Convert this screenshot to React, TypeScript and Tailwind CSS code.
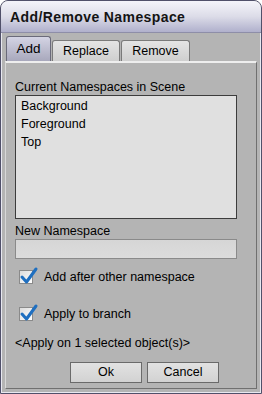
import React from "react";

function Check() {
  return (
    <div className="relative w-[14px] h-[14px] border border-[#8a8a8a] bg-gradient-to-br from-[#dcdcdc] to-[#ffffff]">
      <svg className="absolute left-[-1px] top-[-5px]" width="20" height="20" viewBox="0 0 20 20">
        <path d="M3 11 L7.5 16 L17 3" fill="none" stroke="#1f6fc0" strokeWidth="3" strokeLinecap="round" strokeLinejoin="round" />
      </svg>
    </div>
  );
}

export default function App() {
  const font = { fontFamily: '"Liberation Sans", Arial, sans-serif' };
  return (
    <div className="w-[262px] h-[394px] bg-white" style={font}>
      <div className="w-full h-full flex flex-col rounded-t-[8px] border border-[#50506a] bg-[#b4b4b4] overflow-hidden">
        <div className="h-[32px] shrink-0 bg-gradient-to-b from-[#f4f4fa] via-[#dcdce8] to-[#b0b0cc] flex items-center pl-[9px] pt-[2px] border-b border-[#8e8ea8]">
          <span className="text-[14px] font-bold text-[#141414] tracking-[0.4px]">
            Add/Remove Namespace
          </span>
        </div>
        <div className="flex-1 flex flex-col px-[3px] pb-[3px] border-l border-r border-b border-[#e8e8f0]">
          <div className="flex items-end h-[28px] pl-[1px] pt-[3px]">
            <div className="h-[25px] w-[45px] rounded-t-[3px] border border-b-0 border-[#6a6a7a] bg-gradient-to-b from-[#d4d4e4] to-[#a8a8bc] flex items-center justify-center text-[13.5px] text-black">
              Add
            </div>
            <div className="h-[21px] w-[68px] ml-[1px] rounded-t-[3px] border border-b-0 border-[#7a7a7a] bg-gradient-to-b from-[#e4e4e4] to-[#cfcfcf] flex items-center justify-center text-[12.5px] text-black">
              Replace
            </div>
            <div className="h-[21px] w-[69px] ml-[1px] rounded-t-[3px] border border-b-0 border-[#7a7a7a] bg-gradient-to-b from-[#e4e4e4] to-[#cfcfcf] flex items-center justify-center text-[12.5px] text-black">
              Remove
            </div>
          </div>
          <div className="flex-1 flex flex-col border-t-2 border-t-[#eeeeee] border-l border-l-[#d8d8d8] border-r border-r-[#707070] border-b border-b-[#707070] pl-[9px] pr-[19px] text-[12.5px] text-black">
            <div className="mt-[17px] leading-[14px]">Current Namespaces in Scene</div>
            <div className="h-[124px] mt-[1px] border border-[#3c3c3c] bg-[#e0e0e0] pl-[5px] pt-[1px] leading-[18px]">
              <div>Background</div>
              <div>Foreground</div>
              <div>Top</div>
            </div>
            <div className="mt-[5px] leading-[14px]">New Namespace</div>
            <div className="h-[20px] mt-[1px] border border-[#8a8a8a] bg-gradient-to-b from-[#d6d6d6] to-[#dcdcdc]" />
            <div className="flex items-center mt-[11px] h-[14px] pl-[4px] gap-[11px]">
              <Check />
              <span>Add after other namespace</span>
            </div>
            <div className="flex items-center mt-[23px] h-[14px] pl-[4px] gap-[11px]">
              <Check />
              <span>Apply to branch</span>
            </div>
            <div className="mt-[15px] leading-[14px]">&lt;Apply on 1 selected object(s)&gt;</div>
            <div className="flex gap-[5px] mt-[12px] ml-[55px]">
              <div className="w-[72px] h-[21px] border border-[#6a6a6a] bg-gradient-to-b from-[#e2e2e2] to-[#d2d2d2] flex items-center justify-center">Ok</div>
              <div className="w-[72px] h-[21px] border border-[#6a6a6a] bg-gradient-to-b from-[#e2e2e2] to-[#d2d2d2] flex items-center justify-center">Cancel</div>
            </div>
          </div>
        </div>
      </div>
    </div>
  );
}
